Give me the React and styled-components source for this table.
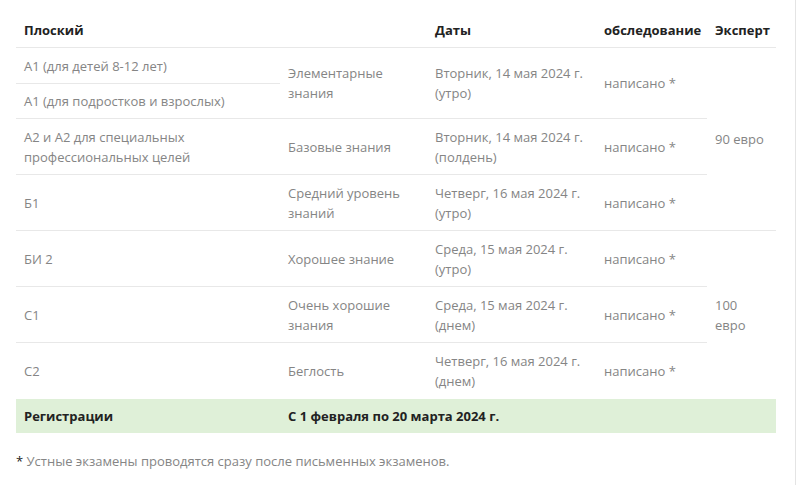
import React from 'react';
import styled, { createGlobalStyle } from 'styled-components';

const GlobalStyle = createGlobalStyle`
  html, body {
    margin: 0;
    padding: 0;
    background: #fff;
  }
  body {
    font-family: "Open Sans", "Liberation Sans", sans-serif;
    font-size: 13px;
    color: #858585;
  }
`;

const Page = styled.div`
  width: 796px;
  height: 485px;
  border-right: 1px solid #e4e4e4;
  box-sizing: border-box;
  padding: 0 19px 0 16px;
`;

const Table = styled.table`
  width: 760px;
  border-collapse: collapse;
  table-layout: fixed;
`;

const Head = styled.th`
  height: 40px;
  padding: 0 8px 7px;
  vertical-align: bottom;
  text-align: left;
  font-weight: 700;
  color: #222;
  line-height: 20px;
  white-space: nowrap;
  border-bottom: 1px solid #e8e8e8;
`;

const Row = styled.tr`
  height: ${(props) => props.h}px;
`;

const Cell = styled.td`
  padding: 0 8px;
  line-height: 20px;
  vertical-align: middle;
  border-top: ${(props) => (props.noline ? 'none' : '1px solid #e8e8e8')};
`;

const RegRow = styled.tr`
  height: 34px;
  background: #dff0d8;
`;

const RegCell = styled.td`
  padding: 0 8px;
  font-weight: 700;
  color: #222;
  line-height: 20px;
  vertical-align: middle;
`;

const Note = styled.p`
  margin: 18px 0 0;
  line-height: 20px;
  color: #858585;

  b {
    color: #222;
    font-weight: 400;
  }
`;

const rows = [
  { level: 'Б1', name: ['Средний уровень', 'знаний'], date: ['Четверг, 16 мая 2024 г.', '(утро)'] },
  { level: 'БИ 2', name: ['Хорошее знание'], date: ['Среда, 15 мая 2024 г.', '(утро)'] },
];

function Lines({ items }) {
  return items.map((t, i) => (
    <React.Fragment key={i}>
      {i > 0 && <br />}
      {t}
    </React.Fragment>
  ));
}

export default function App() {
  return (
    <Page>
      <GlobalStyle />
      <Table>
        <colgroup>
          <col style={{ width: 264 }} />
          <col style={{ width: 147 }} />
          <col style={{ width: 169 }} />
          <col style={{ width: 111 }} />
          <col style={{ width: 69 }} />
        </colgroup>
        <thead>
          <tr>
            <Head>Плоский</Head>
            <Head />
            <Head>Даты</Head>
            <Head>обследование</Head>
            <Head>Эксперт</Head>
          </tr>
        </thead>
        <tbody>
          <Row h={36}>
            <Cell noline>А1 (для детей 8-12 лет)</Cell>
            <Cell noline rowSpan={2}>
              <Lines items={['Элементарные', 'знания']} />
            </Cell>
            <Cell noline rowSpan={2}>
              <Lines items={['Вторник, 14 мая 2024 г.', '(утро)']} />
            </Cell>
            <Cell noline rowSpan={2}>написано *</Cell>
            <Cell noline rowSpan={4}>90 евро</Cell>
          </Row>
          <Row h={35}>
            <Cell>А1 (для подростков и взрослых)</Cell>
          </Row>
          <Row h={56}>
            <Cell>
              <Lines items={['А2 и А2 для специальных', 'профессиональных целей']} />
            </Cell>
            <Cell>Базовые знания</Cell>
            <Cell>
              <Lines items={['Вторник, 14 мая 2024 г.', '(полдень)']} />
            </Cell>
            <Cell>написано *</Cell>
          </Row>
          <Row h={56}>
            <Cell>{rows[0].level}</Cell>
            <Cell>
              <Lines items={rows[0].name} />
            </Cell>
            <Cell>
              <Lines items={rows[0].date} />
            </Cell>
            <Cell>написано *</Cell>
          </Row>
          <Row h={56}>
            <Cell>{rows[1].level}</Cell>
            <Cell>
              <Lines items={rows[1].name} />
            </Cell>
            <Cell>
              <Lines items={rows[1].date} />
            </Cell>
            <Cell>написано *</Cell>
            <Cell rowSpan={3}>
              <Lines items={['100', 'евро']} />
            </Cell>
          </Row>
          <Row h={56}>
            <Cell>С1</Cell>
            <Cell>
              <Lines items={['Очень хорошие', 'знания']} />
            </Cell>
            <Cell>
              <Lines items={['Среда, 15 мая 2024 г.', '(днем)']} />
            </Cell>
            <Cell>написано *</Cell>
          </Row>
          <Row h={56}>
            <Cell>С2</Cell>
            <Cell>Беглость</Cell>
            <Cell>
              <Lines items={['Четверг, 16 мая 2024 г.', '(днем)']} />
            </Cell>
            <Cell>написано *</Cell>
          </Row>
          <RegRow>
            <RegCell>Регистрации</RegCell>
            <RegCell colSpan={4}>С 1 февраля по 20 марта 2024 г.</RegCell>
          </RegRow>
        </tbody>
      </Table>
      <Note>
        <b>*</b> Устные экзамены проводятся сразу после письменных экзаменов.
      </Note>
    </Page>
  );
}
